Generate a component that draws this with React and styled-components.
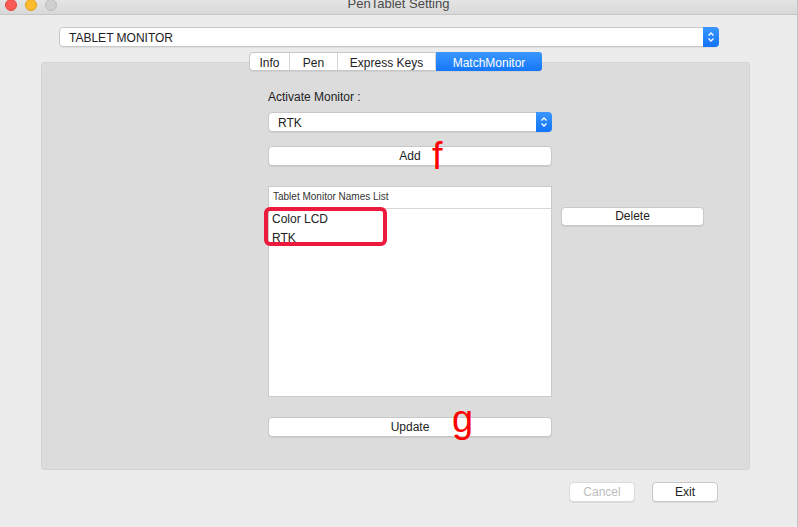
import React from 'react'
import styled, { createGlobalStyle } from 'styled-components'

const GlobalStyle = createGlobalStyle`
  * { box-sizing: border-box; }
  body {
    margin: 0;
    font-family: "Liberation Sans", Arial, sans-serif;
    background: #ececec;
  }
  #root {
    width: 798px;
    height: 527px;
    overflow: hidden;
  }
`

const Window = styled.div`
  width: 798px;
  height: 527px;
  background: #ececec;
  border-right: 1px solid #c4c4c4;
  display: flex;
  flex-direction: column;
`

const TitleBar = styled.div`
  height: 15px;
  flex-shrink: 0;
  display: grid;
  grid-template-columns: 1fr auto 1fr;
  align-items: start;
  overflow: hidden;
  background: linear-gradient(#e4e4e4, #d8d8d8);
  border-bottom: 1px solid #c6c6c6;
`

const Lights = styled.div`
  display: flex;
  gap: 8px;
  padding-left: 5px;
  margin-top: -1px;
`

const Light = styled.span`
  width: 12px;
  height: 12px;
  border-radius: 50%;
  background: ${p => p.color};
  border: 1px solid ${p => p.edge};
`

const Title = styled.div`
  font-size: 13px;
  line-height: 14px;
  margin-top: -3px;
  color: #4a4a4a;
`

const Body = styled.div`
  display: flex;
  flex-direction: column;
`

const Popup = styled.div`
  width: ${p => p.width}px;
  height: 20px;
  margin: ${p => p.margin || '0'};
  display: flex;
  background: #fff;
  border: 1px solid #c8c8c8;
  border-radius: 4px;
  box-shadow: 0 1px 0 rgba(0, 0, 0, 0.06);
  font-size: 12px;
  color: #222;
`

const PopupLabel = styled.div`
  flex: 1;
  padding-left: 9px;
  padding-top: 1px;
  line-height: 18px;
`

const Stepper = styled.div`
  width: 16px;
  margin: -1px -1px -1px 0;
  border-radius: 0 4px 4px 0;
  background: linear-gradient(#3a97fd, #1273f8);
  display: flex;
  align-items: center;
  justify-content: center;
`

const TabsRow = styled.div`
  margin: 5px 0 -9px 41px;
  width: 709px;
  display: flex;
  justify-content: center;
  position: relative;
  z-index: 1;
`

const Tabs = styled.div`
  display: flex;
  height: 19px;
  background: #fff;
  border: 1px solid #c6c6c6;
  border-radius: 4px;
  box-shadow: 0 1px 0 rgba(0, 0, 0, 0.05);
`

const Tab = styled.div`
  width: ${p => p.width}px;
  text-align: center;
  font-size: 12px;
  line-height: 17px;
  color: ${p => (p.active ? '#fff' : '#222')};
  background: ${p => (p.active ? 'linear-gradient(#3a97fd, #1677f9)' : 'transparent')};
  border-left: ${p => (p.first ? 'none' : '1px solid #d6d6d6')};
  border-radius: ${p => (p.active ? '0 3px 3px 0' : '0')};
  margin: ${p => (p.active ? '-1px -1px -1px 0' : '0')};
  padding-top: ${p => (p.active ? '3px' : '2px')};
`

const Panel = styled.div`
  margin-left: 41px;
  width: 709px;
  height: 408px;
  background: #dcdcdc;
  border: 1px solid #d3d3d3;
  border-radius: 3px;
  display: flex;
  padding-left: 226px;
`

const Column = styled.div`
  width: 284px;
  display: flex;
  flex-direction: column;
  padding-top: 27px;
`

const Label = styled.div`
  font-size: 12px;
  line-height: 14px;
  color: #222;
`

const ButtonSlot = styled.div`
  position: relative;
  margin-top: ${p => p.top}px;
`

const Button = styled.div`
  width: ${p => p.width || 284}px;
  height: ${p => p.height || 20}px;
  background: #fff;
  border: 1px solid ${p => (p.disabled ? '#dadada' : '#c8c8c8')};
  border-radius: 4px;
  box-shadow: 0 1px 0 rgba(0, 0, 0, 0.07);
  font-size: 12px;
  line-height: ${p => (p.height || 20) - 2}px;
  text-align: center;
  color: ${p => (p.disabled ? '#bdbdbd' : '#222')};
`

const Mark = styled.span`
  position: absolute;
  left: ${p => p.left}px;
  top: ${p => p.top}px;
  font-family: "Liberation Sans", Arial, sans-serif;
  font-size: 38px;
  line-height: 1;
  color: #ff0000;
`

const ListBox = styled.div`
  position: relative;
  margin-top: 20px;
  height: 211px;
  background: #fff;
  border: 1px solid #cacaca;
  display: flex;
  flex-direction: column;
`

const ListHeader = styled.div`
  height: 22px;
  padding-left: 4px;
  font-size: 10px;
  line-height: 20px;
  color: #333;
  border-bottom: 1px solid #d6d6d6;
`

const ListItem = styled.div`
  height: 19px;
  padding-left: 3px;
  padding-top: 1px;
  font-size: 12px;
  line-height: 19px;
  color: #222;
`

const Highlight = styled.div`
  position: absolute;
  left: -5px;
  top: 20px;
  width: 123px;
  height: 39px;
  border: 4px solid #ec1a3d;
  border-radius: 6px;
`

const SideColumn = styled.div`
  margin-left: 9px;
  padding-top: 144px;
`

const Footer = styled.div`
  display: flex;
  justify-content: flex-end;
  gap: 17px;
  margin-top: 12px;
  padding-right: 79px;
`

function Chevrons() {
  return (
    <svg width="8" height="12" viewBox="0 0 8 12">
      <path d="M1.5 4.5 L4 2 L6.5 4.5 M1.5 7.5 L4 10 L6.5 7.5" fill="none" stroke="#fff" strokeWidth="1.3" />
    </svg>
  )
}

export default function App() {
  return (
    <Window>
      <GlobalStyle />
      <TitleBar>
        <Lights>
          <Light color="#fc5b57" edge="#e2463f" />
          <Light color="#fdbc2e" edge="#e1a116" />
          <Light color="#cfcfcf" edge="#bdbdbd" />
        </Lights>
        <Title>PenTablet Setting</Title>
        <div />
      </TitleBar>
      <Body>
        <Popup width={660} margin="12px 0 0 59px">
          <PopupLabel>TABLET MONITOR</PopupLabel>
          <Stepper><Chevrons /></Stepper>
        </Popup>
        <TabsRow>
          <Tabs>
            <Tab first width={39}>Info</Tab>
            <Tab width={48}>Pen</Tab>
            <Tab width={98}>Express Keys</Tab>
            <Tab active width={107}>MatchMonitor</Tab>
          </Tabs>
        </TabsRow>
        <Panel>
          <Column>
            <Label>Activate Monitor :</Label>
            <Popup width={284} margin="8px 0 0 0">
              <PopupLabel>RTK</PopupLabel>
              <Stepper><Chevrons /></Stepper>
            </Popup>
            <ButtonSlot top={14}>
              <Button>Add</Button>
              <Mark left={164} top={-9}>f</Mark>
            </ButtonSlot>
            <ListBox>
              <ListHeader>Tablet Monitor Names List</ListHeader>
              <ListItem>Color LCD</ListItem>
              <ListItem>RTK</ListItem>
              <Highlight />
            </ListBox>
            <ButtonSlot top={20}>
              <Button>Update</Button>
              <Mark left={184} top={-17}>g</Mark>
            </ButtonSlot>
          </Column>
          <SideColumn>
            <Button width={143} height={19}>Delete</Button>
          </SideColumn>
        </Panel>
        <Footer>
          <Button width={66} disabled>Cancel</Button>
          <Button width={66}>Exit</Button>
        </Footer>
      </Body>
    </Window>
  )
}
